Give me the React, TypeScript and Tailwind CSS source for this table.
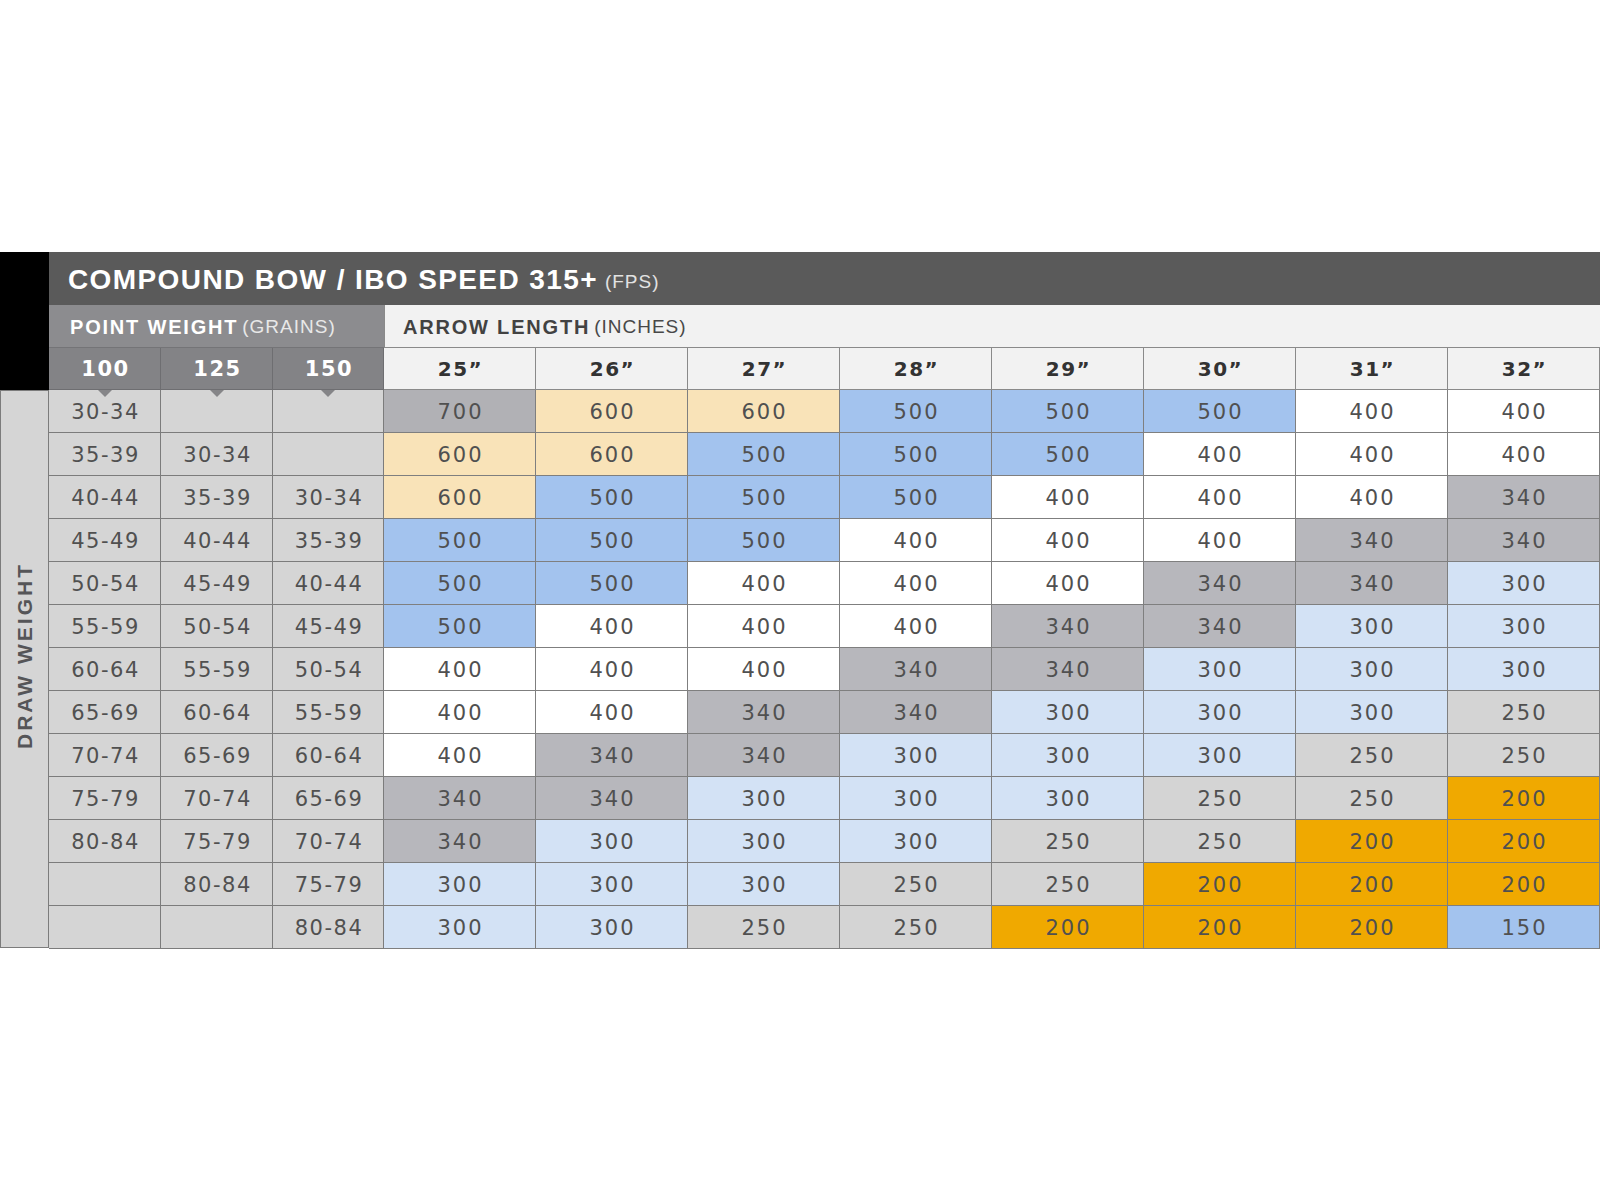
// Arrow spine chart — compound bow / IBO speed 315+

const FONT = "font-['Liberation_Sans',Arial,sans-serif]"
const NUM = "font-['DejaVu_Sans',Arial,sans-serif]"

const LENGTHS = ['25”', '26”', '27”', '28”', '29”', '30”', '31”', '32”']
const POINTS = ['100', '125', '150']

const ROWS: { ranges: string[]; spines: number[] }[] = [
  { ranges: ['30-34', '', ''], spines: [700, 600, 600, 500, 500, 500, 400, 400] },
  { ranges: ['35-39', '30-34', ''], spines: [600, 600, 500, 500, 500, 400, 400, 400] },
  { ranges: ['40-44', '35-39', '30-34'], spines: [600, 500, 500, 500, 400, 400, 400, 340] },
  { ranges: ['45-49', '40-44', '35-39'], spines: [500, 500, 500, 400, 400, 400, 340, 340] },
  { ranges: ['50-54', '45-49', '40-44'], spines: [500, 500, 400, 400, 400, 340, 340, 300] },
  { ranges: ['55-59', '50-54', '45-49'], spines: [500, 400, 400, 400, 340, 340, 300, 300] },
  { ranges: ['60-64', '55-59', '50-54'], spines: [400, 400, 400, 340, 340, 300, 300, 300] },
  { ranges: ['65-69', '60-64', '55-59'], spines: [400, 400, 340, 340, 300, 300, 300, 250] },
  { ranges: ['70-74', '65-69', '60-64'], spines: [400, 340, 340, 300, 300, 300, 250, 250] },
  { ranges: ['75-79', '70-74', '65-69'], spines: [340, 340, 300, 300, 300, 250, 250, 200] },
  { ranges: ['80-84', '75-79', '70-74'], spines: [340, 300, 300, 300, 250, 250, 200, 200] },
  { ranges: ['', '80-84', '75-79'], spines: [300, 300, 300, 250, 250, 200, 200, 200] },
  { ranges: ['', '', '80-84'], spines: [300, 300, 250, 250, 200, 200, 200, 150] },
]

/** spine value → cell fill */
function spineColor(v: number): string {
  switch (v) {
    case 700: return 'bg-[#b1b1b5]'
    case 600: return 'bg-[#f9e3b8]'
    case 500: return 'bg-[#a3c3ee]'
    case 400: return 'bg-white'
    case 340: return 'bg-[#b7b7bc]'
    case 300: return 'bg-[#d3e2f5]'
    case 250: return 'bg-[#d4d4d4]'
    case 200: return 'bg-[#f0a900]'
    case 150: return 'bg-[#a3c3ee]'
    default: return 'bg-white'
  }
}

export default function App() {
  return (
    <div className={`w-[1600px] h-[1200px] bg-white pt-[252px] ${FONT}`}>
      <div className="flex">
        {/* left rail */}
        <div className="w-[49px] shrink-0 flex flex-col">
          <div className="h-[138px] bg-black" />
          <div className="h-[558px] bg-[#d5d5d5] border border-[#7c7c7c] flex items-center justify-center pb-[28px]">
            <span className="[writing-mode:vertical-rl] rotate-180 whitespace-nowrap text-[21px] font-bold tracking-[3px] text-[#555558]">
              DRAW WEIGHT
            </span>
          </div>
        </div>

        <div className="flex-1 min-w-0">
          <div className="h-[53px] bg-[#5a5a5a] flex items-center pl-[19px] pt-[3px]">
            <span className="text-[28px] font-bold text-white tracking-[1.4px]">COMPOUND BOW / IBO SPEED 315+</span>
            <span className="ml-[7px] mt-[4px] text-[19px] text-[#e2e2e2] tracking-[1px]">(FPS)</span>
          </div>

          <div className="flex h-[43px]">
            <div className="w-[335px] bg-[#8c8c8f] border-b border-[#747477] flex items-center pl-[21px] pt-[2px]">
              <span className="text-[20px] font-bold text-white tracking-[1.8px]">POINT WEIGHT</span>
              <span className="ml-[4px] text-[19px] text-[#e8e8e8] tracking-[1px]">(GRAINS)</span>
            </div>
            <div className="flex-1 bg-[#f2f2f2] border-l border-b border-[#8a8a8a] flex items-center pl-[18px] pt-[2px]">
              <span className="text-[20px] font-bold text-[#424242] tracking-[1.8px]">ARROW LENGTH</span>
              <span className="ml-[4px] text-[19px] text-[#484848] tracking-[1px]">(INCHES)</span>
            </div>
          </div>

          <div className="grid grid-cols-[112px_112px_111px_repeat(8,152px)]">
            {POINTS.map((p) => (
              <div
                key={p}
                className="relative h-[42px] bg-[#838386] border-r border-b border-[#6e6e71] flex items-center justify-center pt-[2px]"
              >
                <span className={`${NUM} text-[21px] font-bold text-white tracking-[1.5px] pl-[2px]`}>{p}</span>
                <span className="absolute left-1/2 -translate-x-1/2 bottom-[-8px] z-10 w-0 h-0 border-l-[7px] border-r-[7px] border-t-[7px] border-l-transparent border-r-transparent border-t-[#858588]" />
              </div>
            ))}
            {LENGTHS.map((l) => (
              <div
                key={l}
                className="h-[42px] bg-[#f2f2f2] border-r border-b border-[#8a8a8a] flex items-center justify-center pt-[1px]"
              >
                <span className={`${NUM} text-[20px] font-bold text-[#333333] tracking-[1.5px] pl-[2px]`}>{l}</span>
              </div>
            ))}

            {ROWS.map((row, r) => (
              <Row key={r} ranges={row.ranges} spines={row.spines} />
            ))}
          </div>
        </div>
      </div>
    </div>
  )
}

function Row({ ranges, spines }: { ranges: string[]; spines: number[] }) {
  return (
    <>
      {ranges.map((t, i) => (
        <div
          key={'r' + i}
          className="h-[43px] bg-[#d5d5d5] border-r border-b border-[#7c7c7c] flex items-center justify-center pt-[3px]"
        >
          <span className={`${NUM} text-[21px] text-[#505050] tracking-[1.5px] pl-[2px]`}>{t}</span>
        </div>
      ))}
      {spines.map((v, i) => (
        <div
          key={'s' + i}
          className={`h-[43px] ${spineColor(v)} border-r border-b border-[#7f7f7f] flex items-center justify-center pt-[3px]`}
        >
          <span className={`${NUM} text-[21px] text-[#505050] tracking-[2px] pl-[2px]`}>{v}</span>
        </div>
      ))}
    </>
  )
}
